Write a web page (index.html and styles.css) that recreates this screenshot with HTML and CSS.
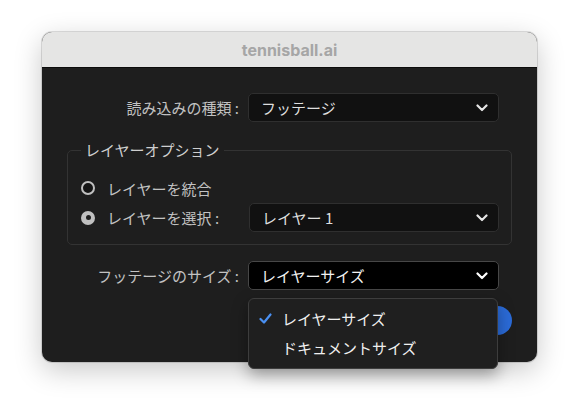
FILE: index.html
```html
<!DOCTYPE html>
<html lang="ja">
<head>
    <meta charset="UTF-8">
    <meta name="viewport" content="width=device-width, initial-scale=1.0">
    <title>tennisball.ai</title>
    <link rel="stylesheet" href="styles.css">
</head>
<body>
    <div class="window">
        <div class="titlebar">tennisball.ai</div>
        <div class="content">
            <div class="row">
                <label class="label">読み込みの種類 :</label>
                <button class="select" type="button">
                    <span>フッテージ</span>
                    <svg class="chev" width="12" height="8" viewBox="0 0 12 8"><path d="M1.5 1.5 L6 6 L10.5 1.5" fill="none" stroke="#e6e6e6" stroke-width="2.2" stroke-linecap="round" stroke-linejoin="round"/></svg>
                </button>
            </div>

            <fieldset class="options">
                <legend>レイヤーオプション</legend>
                <div class="radio-row">
                    <span class="radio"></span>
                    <span class="radio-label">レイヤーを統合</span>
                </div>
                <div class="radio-row grid">
                    <div class="radio-cell">
                        <span class="radio checked"></span>
                        <span class="radio-label">レイヤーを選択 :</span>
                    </div>
                    <button class="select" type="button">
                        <span>レイヤー 1</span>
                        <svg class="chev" width="12" height="8" viewBox="0 0 12 8"><path d="M1.5 1.5 L6 6 L10.5 1.5" fill="none" stroke="#e6e6e6" stroke-width="2.2" stroke-linecap="round" stroke-linejoin="round"/></svg>
                    </button>
                </div>
            </fieldset>

            <div class="row size-row">
                <label class="label">フッテージのサイズ :</label>
                <div class="select-wrap">
                    <button class="select focus" type="button">
                        <span>レイヤーサイズ</span>
                        <svg class="chev" width="12" height="8" viewBox="0 0 12 8"><path d="M1.5 1.5 L6 6 L10.5 1.5" fill="none" stroke="#ffffff" stroke-width="2.2" stroke-linecap="round" stroke-linejoin="round"/></svg>
                    </button>
                    <ul class="menu">
                        <li class="menu-item">
                            <svg class="check" width="13" height="11" viewBox="0 0 13 11"><path d="M1.5 6 L5 9.5 L11.5 1.5" fill="none" stroke="#4a90f2" stroke-width="2.2" stroke-linecap="round" stroke-linejoin="round"/></svg>
                            レイヤーサイズ
                        </li>
                        <li class="menu-item">ドキュメントサイズ</li>
                    </ul>
                </div>
            </div>

            <div class="buttons">
                <button class="btn-primary" type="button">OK</button>
            </div>
        </div>
    </div>
</body>
</html>
```

FILE: styles.css
```css
html { height: 100%; }
body { margin: 0; min-height: 100%; box-sizing: border-box; padding: 32px 0 0 42px; background: #ffffff; font-family: "Noto Sans CJK JP", "Noto Sans", sans-serif; }
.window { width: 495px; height: 330px; background: #1e1e1e; border-radius: 10px; box-shadow: 0 8px 28px rgba(0, 0, 0, 0.22), 0 0 0 1px rgba(0, 0, 0, 0.12); }
.titlebar { height: 35px; display: flex; align-items: center; justify-content: center; background: #e5e5e4; border-radius: 10px 10px 0 0; border-bottom: 1px solid #0c0c0c; color: #a6a6a6; font-family: Inter, "Noto Sans", sans-serif; font-weight: 700; font-size: 16px; }
.content { padding: 25px 25px 0; }
.row { display: grid; grid-template-columns: 1fr 251px; column-gap: 9px; align-items: center; margin-right: 13px; }
.label { text-align: right; color: #c2c2c2; font-size: 15px; }
.select { display: flex; align-items: center; justify-content: space-between; height: 29px; box-sizing: border-box; padding: 0 10px 0 12px; background: #111111; border: 1px solid #2f2f2f; border-radius: 5px; color: #dedede; font-family: inherit; font-size: 15px; width: 100%; }
.select.focus { background: #000000; border-color: #474747; color: #f2f2f2; }
.options { margin: 18px 0 0; padding: 18px 12px 12px 13px; border: 1px solid #333333; border-radius: 5px; min-inline-size: 0; }
.options legend { padding: 0 4px; font-size: 15px; line-height: 20px; color: #cfcfcf; }
.radio-row { display: flex; align-items: center; gap: 12px; height: 20px; }
.radio-row.grid { display: grid; grid-template-columns: 1fr 250px; column-gap: 0; height: 29px; margin-top: 5px; }
.radio-cell { display: flex; align-items: center; gap: 12px; }
.radio { width: 14px; height: 14px; box-sizing: border-box; border-radius: 50%; border: 2.5px solid #c0c0c0; background: #151515; }
.radio.checked { background: #c0c0c0; display: flex; align-items: center; justify-content: center; }
.radio.checked::after { content: ""; width: 5px; height: 5px; border-radius: 50%; background: #1e1e1e; }
.radio-label { color: #c2c2c2; font-size: 15px; }
.size-row { margin-top: 16px; }
.select-wrap { position: relative; }
.menu { position: absolute; top: calc(100% + 8px); left: 0; width: 250px; box-sizing: border-box; margin: 0; padding: 5px 0 6px; list-style: none; background: #1f1f1f; border: 1px solid #3d3d3d; border-radius: 6px; box-shadow: 0 6px 16px rgba(0, 0, 0, 0.35); z-index: 2; }
.menu-item { position: relative; height: 29px; display: flex; align-items: center; padding-left: 33px; color: #f0f0f0; font-size: 15px; }
.check { position: absolute; left: 10px; top: 9px; }
.buttons { display: flex; justify-content: flex-end; margin-top: 16px; }
.btn-primary { width: 80px; height: 29px; border: none; border-radius: 15px; background: #2b6bd8; color: #ffffff; font-size: 14px; }
```
